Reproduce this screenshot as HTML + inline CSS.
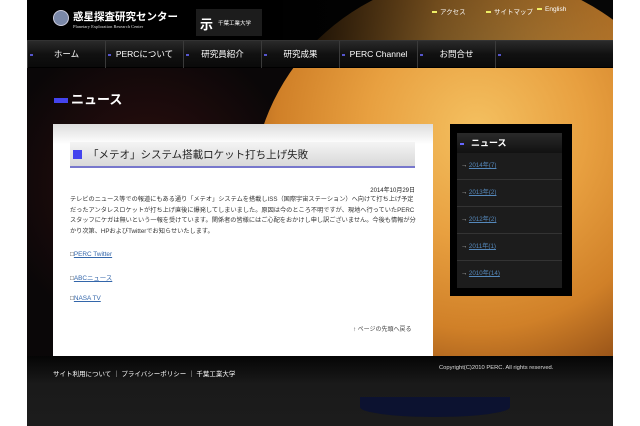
<!DOCTYPE html>
<html><head><meta charset="utf-8"><style>
*{margin:0;padding:0;box-sizing:border-box}
body{width:640px;height:426px;background:#fff;font-family:"Liberation Sans","Noto Sans CJK JP",sans-serif;position:relative;overflow:hidden}
.a{position:absolute}
#pg{position:absolute;left:27px;top:0;width:586px;height:426px;background:#080808;overflow:hidden}
.stars{position:absolute;left:0;top:68px;width:300px;height:290px;background:radial-gradient(circle at 40% 40%,rgba(120,30,30,.35),transparent 60%),#0a0708}
.mars{position:absolute;left:225px;top:-25px;width:450px;height:440px;border-radius:50%;
background:radial-gradient(circle at 50% 35%,#f4c060 0%,#e8a040 30%,#d08028 55%,#8a4814 78%,#2a1408 95%)}
.hdr{position:absolute;left:0;top:0;width:586px;height:40px;background:linear-gradient(90deg,#000 40%,rgba(0,0,0,.5) 70%,rgba(0,0,0,.2))}
.nav{position:absolute;left:0;top:40px;width:586px;height:28px;background:linear-gradient(#2a2a2a,#111 50%,#0a0a0a);border-top:1px solid #333;border-bottom:1px solid #000}
.nav div{position:absolute;top:0;height:27px;line-height:27px;color:#fff;font-size:8.5px;text-align:center;border-left:1px solid #3a3a3a;width:78px}
.nav div:before{content:"";position:absolute;left:2px;top:13px;width:3px;height:2px;background:#55c}
.foot{position:absolute;left:0;top:356px;width:586px;height:70px;background:linear-gradient(#050505,#1a1a1a 40%,#1c1c1c)}
.shadow{position:absolute;left:333px;top:397px;width:150px;height:20px;border-radius:0 0 50% 50%;background:#0c1230}
.tw span{position:absolute;top:6px;color:#fff;font-size:6.5px;white-space:nowrap;width:60px}
.tw span:before{content:"";display:inline-block;width:5px;height:2px;background:#ee6;margin-right:3px;vertical-align:middle}
.ttl{left:54px;top:89px;color:#fff;font-size:13px;font-weight:bold}
.ttl:before{content:"";display:inline-block;width:14px;height:5px;background:#44e;margin-right:3px;vertical-align:middle}
.box{left:53px;top:124px;width:380px;height:232px;background:#fff}
.box .top{position:absolute;left:0;top:0;width:380px;height:20px;background:linear-gradient(#ddd,#fff)}
.h{left:70px;top:142px;width:345px;height:26px;background:linear-gradient(#f4f4f4,#d8d8d8);border-bottom:2px solid #77c;font-size:10.5px;line-height:26px;color:#222;padding-left:18px}
.h:before{content:"";position:absolute;left:3px;top:8px;width:9px;height:9px;background:#44e}
.date{left:360px;width:55px;text-align:right;top:185px;font-size:6px;color:#222}
.body{left:70px;top:195px;width:346px;font-size:6.2px;line-height:10.5px;color:#333}
.lk{left:70px;font-size:6.4px;color:#36a;text-decoration:underline}
.lk:before{content:"□";color:#333;display:inline-block}
.back{left:353px;top:324px;font-size:6px;color:#444}
.side{left:450px;top:124px;width:122px;height:172px;background:#000}
.sh{position:absolute;left:7px;top:9px;width:105px;height:20px;background:linear-gradient(#2a2a2a,#111);color:#fff;font-size:9px;font-weight:bold;line-height:20px;padding-left:14px}
.sh:before{content:"";position:absolute;left:3px;top:10px;width:4px;height:2px;background:#66f}
.si{position:absolute;left:7px;width:105px;height:27px;background:#1c1c1c;border-bottom:1px solid #333;font-size:6.2px;line-height:26px;color:#ccc;padding-left:4px}
.si u{color:#58b}
</style></head><body>
<div id="pg">
<div class="stars"></div>
<div class="mars"></div>
<div class="hdr"></div>
<div class="nav">
<div style="left:0">ホーム</div><div style="left:78px">PERCについて</div><div style="left:156px">研究員紹介</div><div style="left:234px">研究成果</div><div style="left:312px">PERC Channel</div><div style="left:390px">お問合せ</div><div style="left:468px;width:118px"></div>
</div>
<div class="foot"></div>
<div class="shadow"></div>
</div>
<div class="a" style="left:53px;top:10px;width:16px;height:16px;border-radius:50%;background:#7a88a8;border:1px solid #ccd"></div>
<div class="a" style="left:73px;top:9px;color:#fff;font-size:10.5px;font-weight:bold;white-space:nowrap">惑星探査研究センター</div>
<div class="a" style="left:73px;top:24px;color:#ddd;font-size:4.5px;font-family:'Liberation Serif',serif;white-space:nowrap">Planetary Exploration Research Center</div>
<div class="a" style="left:196px;top:9px;width:66px;height:27px;background:#1c1c1c;color:#fff"><span style="position:absolute;left:4px;top:5px;font-size:13px;font-weight:bold">示</span><span style="position:absolute;left:22px;top:10px;font-size:5.5px">千葉工業大学</span></div>
<div class="tw"><span style="left:432px">アクセス</span><span style="left:486px">サイトマップ</span><span style="left:537px">English</span></div>
<div class="a ttl">ニュース</div>
<div class="a box"><div class="top"></div></div>
<div class="a h">「メテオ」システム搭載ロケット打ち上げ失敗</div>
<div class="a date">2014年10月29日</div>
<div class="a body">テレビのニュース等での報道にもある通り「メテオ」システムを搭載しISS（国際宇宙ステーション）へ向けて打ち上げ予定だったアンタレスロケットが打ち上げ直後に爆発してしまいました。原因は今のところ不明ですが、現地へ行っていたPERCスタッフにケガは無いという一報を受けています。関係者の皆様にはご心配をおかけし申し訳ございません。今後も情報が分かり次第、HPおよびTwitterでお知らせいたします。</div>
<div class="a lk" style="top:251px">PERC Twitter</div>
<div class="a lk" style="top:273px">ABCニュース</div>
<div class="a lk" style="top:295px">NASA TV</div>
<div class="a back">↑ ページの先頭へ戻る</div>
<div class="a side">
<div class="sh">ニュース</div>
<div class="si" style="top:29px">→ <u>2014年(7)</u></div>
<div class="si" style="top:56px">→ <u>2013年(2)</u></div>
<div class="si" style="top:83px">→ <u>2012年(2)</u></div>
<div class="si" style="top:110px">→ <u>2011年(1)</u></div>
<div class="si" style="top:137px;border:none">→ <u>2010年(14)</u></div>
</div>
<div class="a" style="left:53px;top:368px;color:#fff;font-size:6.5px;white-space:nowrap">サイト利用について ｜ プライバシーポリシー ｜ 千葉工業大学</div>
<div class="a" style="left:439px;top:365px;color:#ddd;font-size:5.8px;white-space:nowrap">Copyright(C)2010 PERC. All rights reserved.</div>
</body></html>
